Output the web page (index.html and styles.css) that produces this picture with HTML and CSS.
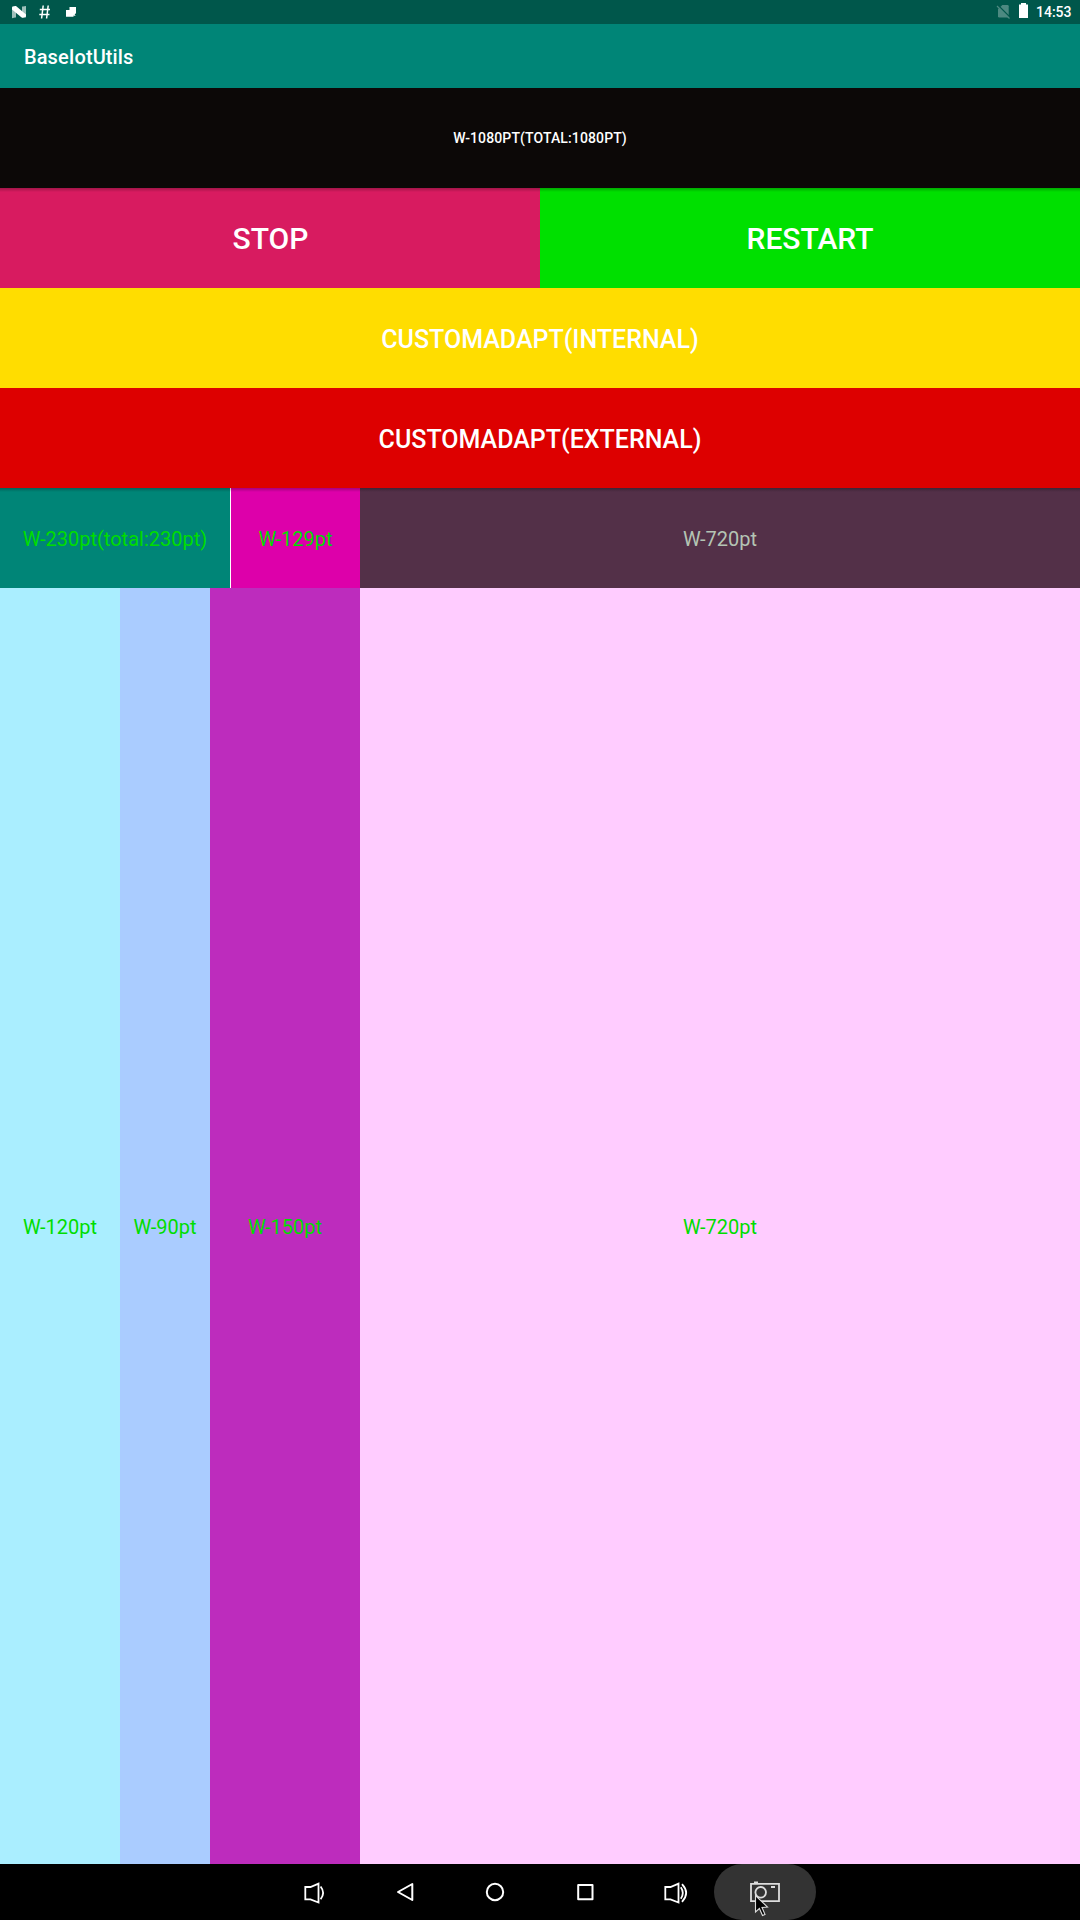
FILE: index.html
```html
<!DOCTYPE html>
<html lang="en">
<head>
<meta charset="utf-8">
<title>BaseIotUtils</title>
<link rel="stylesheet" href="styles.css">
</head>
<body>
<div class="status-bar">
  <svg class="notifications" width="90" height="24" viewBox="0 0 90 24">
    <path class="faded" d="M12 6.5h4v11h-1l-3 .8zM22 6.5h1l3-.6v11.6h-4z"/>
    <path class="solid" d="M12 7.6Q13 5.8 16 6L26 14.6V16.6Q24.500 18 21.600 17.600L12 9.400z"/>
    <path class="hash" d="M43.200 5.500L41.600 18.500M48.200 5.500L46.600 18.500M39.800 9.500H50M39.300 14.500H49.500"/>
    <path class="solid" d="M69.500 7H76V13.200L74.700 14.200L75.600 16L73.500 15.400V16.700H66V10H69.500z"/>
  </svg>
  <div class="system">
    <svg width="40" height="24" viewBox="0 0 40 24">
      <path class="no-sim" d="M12.300 5H17.500Q18.700 5 18.700 6.200V17.500H9.300Q8 17.500 8 16.300V9.300z"/>
      <path class="slash-gap" d="M8 5.200L20 17.200"/>
      <path class="slash" d="M7 6L19.500 18.500"/>
      <path class="solid" d="M31 4.500V3h5v1.500h2V18H29V4.500z"/>
    </svg>
    <span class="clock">14:53</span>
  </div>
</div>
<header class="app-bar">BaseIotUtils</header>
<main class="content">
  <div class="row black">W-1080PT(TOTAL:1080PT)</div>
  <div class="row split shaded">
    <div class="stop">STOP</div>
    <div class="restart">RESTART</div>
  </div>
  <div class="row custom yellow">CUSTOMADAPT(INTERNAL)</div>
  <div class="row custom red">CUSTOMADAPT(EXTERNAL)</div>
  <div class="row widths shaded">
    <div class="teal">W-230pt(total:230pt)</div>
    <div class="magenta">W-129pt</div>
    <div class="plum">W-720pt</div>
  </div>
  <div class="columns">
    <div class="cyan">W-120pt</div>
    <div class="blue">W-90pt</div>
    <div class="purple">W-150pt</div>
    <div class="pink">W-720pt</div>
  </div>
</main>
<nav class="nav-bar">
  <svg viewBox="0 0 90 56"><path d="M35.300 23H40.500L48.500 19.700V38.500L40.500 35.300H35.300zM50.600 22.500Q55.600 28.800 50.600 35.300"/></svg>
  <svg viewBox="0 0 90 56"><path class="bold" d="M38 28L52.300 20V36z"/></svg>
  <svg viewBox="0 0 90 56"><circle class="bold" cx="45" cy="28" r="8.200"/></svg>
  <svg viewBox="0 0 90 56"><rect class="bold" x="38.200" y="20.900" width="14.300" height="14.300"/></svg>
  <svg viewBox="0 0 90 56"><path d="M35.300 23H40.500L48.500 19.700V38.500L40.500 35.300H35.300zM50.800 23.300Q54.800 29 50.800 34.700M52 20.200Q60.300 29 52 37.800"/></svg>
  <div class="capture">
    <svg viewBox="0 0 90 56"><path class="camera" d="M31 19.900H59V37.100H31zM34 18.500H38M51 23H55"/><circle class="camera" cx="40.700" cy="28.300" r="5.300"/></svg>
    <svg class="cursor" viewBox="0 0 16 24"><path d="M1.500 1.500V18L5.400 14.500L8.500 21.500L11 20.400L8 13.500L13.500 13z"/></svg>
  </div>
</nav>
</body>
</html>
```

FILE: styles.css
```css
* { box-sizing: border-box; }
body {
  margin: 0;
  height: 1920px;
  display: flex;
  flex-direction: column;
  font-family: Roboto, sans-serif;
  font-size: 20px;
  color: #fff;
}
.status-bar {
  height: 24px;
  background: #00574b;
  display: flex;
  justify-content: space-between;
}
.status-bar svg { display: block; }
.solid { fill: #fff; }
.faded { fill: #9fc0bb; }
.hash { fill: none; stroke: #fff; stroke-width: 1.500; }
.no-sim { fill: #4d8981; }
.slash { stroke: #4d8981; stroke-width: 1.200; }
.slash-gap { stroke: #00574b; stroke-width: 1.400; }
.system { display: flex; padding-right: 8px; }
.clock {
  width: 36px;
  margin-left: 6px;
  font-size: 14px;
  font-weight: 500;
  line-height: 24px;
  white-space: nowrap;
}
.app-bar {
  height: 64px;
  padding-left: 24px;
  background: #008577;
  font-weight: 500;
  line-height: 66px;
  letter-spacing: .08px;
}
.content { flex: 1; display: flex; flex-direction: column; }
.row {
  height: 100px;
  display: flex;
  align-items: center;
  justify-content: center;
  font-weight: 500;
}
.row > div, .columns > div {
  display: flex;
  align-items: center;
  justify-content: center;
  padding-top: 2px;
}
.row > div { height: 100%; }
.shaded { position: relative; }
.shaded::after {
  content: "";
  position: absolute;
  inset: 0 0 auto;
  height: 4px;
  background: linear-gradient(rgba(0, 0, 0, .25), rgba(0, 0, 0, 0));
}
.black {
  background: #0c0807;
  font-size: 14px;
  letter-spacing: .12px;
}
.split { font-size: 30px; }
.split > div { width: 540px; padding-top: 0; }
.split > .stop { padding-left: 1px; background: #d81b60; }
.restart { background: #00e000; }
.custom { padding-top: 2px; font-size: 25px; }
.yellow { background: #fd0; }
.red { background: #d00; }
.widths { background: #fff; font-weight: 400; color: #0d0; }
.teal { width: 230px; background: #008577; }
.magenta { width: 129px; margin-left: 1px; background: #d0a; }
.plum { width: 720px; background: #533048; color: #b4c4b4; }
.columns { flex: 1; display: flex; color: #0d0; }
.cyan { width: 120px; background: #aef; }
.blue { width: 90px; background: #acf; }
.purple { width: 150px; background: #bd2cbd; }
.pink { width: 720px; background: #fcf; }
.nav-bar {
  height: 56px;
  background: #000;
  display: flex;
  justify-content: center;
}
.nav-bar > svg, .capture > svg:first-child { width: 90px; height: 56px; }
.nav-bar svg { fill: none; stroke: #fff; stroke-width: 1.800; }
.nav-bar .bold { stroke-width: 2; stroke-linejoin: round; }
.capture {
  position: relative;
  width: 102px;
  margin: 0 -6px;
  padding: 0 6px;
  border-radius: 28px;
  background: #333;
}
.camera { stroke: #ddd; stroke-width: 1.800; }
.nav-bar .cursor {
  position: absolute;
  left: 40px;
  top: 30px;
  width: 16px;
  height: 24px;
  fill: #000;
  stroke: #ddd;
  stroke-width: 1.100;
}
```
